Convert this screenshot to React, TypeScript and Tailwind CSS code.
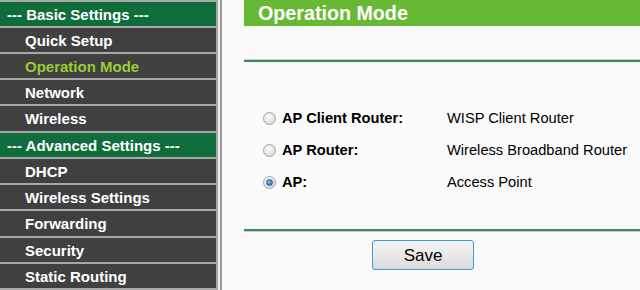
import React from 'react';

type MenuItem = { label: string; kind: 'header' | 'item'; active?: boolean; tall?: boolean };

const menu: MenuItem[] = [
  { label: '--- Basic Settings ---', kind: 'header' },
  { label: 'Quick Setup', kind: 'item' },
  { label: 'Operation Mode', kind: 'item', active: true },
  { label: 'Network', kind: 'item' },
  { label: 'Wireless', kind: 'item', tall: true },
  { label: '--- Advanced Settings ---', kind: 'header' },
  { label: 'DHCP', kind: 'item' },
  { label: 'Wireless Settings', kind: 'item' },
  { label: 'Forwarding', kind: 'item', tall: true },
  { label: 'Security', kind: 'item' },
  { label: 'Static Routing', kind: 'item' },
];

const modes = [
  { name: 'AP Client Router:', desc: 'WISP Client Router', checked: false },
  { name: 'AP Router:', desc: 'Wireless Broadband Router', checked: false },
  { name: 'AP:', desc: 'Access Point', checked: true },
];

const Radio: React.FC<{ checked: boolean }> = ({ checked }) => (
  <span className="w-[13px] h-[13px] rounded-full border border-[#a4a4a4] bg-[radial-gradient(circle_at_40%_35%,#fbfbfb,#cfcfcf)] flex items-center justify-center shrink-0">
    {checked && (
      <span className="w-[7px] h-[7px] rounded-full bg-[radial-gradient(circle_at_40%_35%,#7cc0f0,#1d63a3)] border border-[#2a5a8e]"></span>
    )}
  </span>
);

const App: React.FC = () => {
  return (
    <div className="w-[640px] h-[290px] overflow-hidden flex bg-[#fafafa] font-['Liberation_Sans',Arial,sans-serif]">
      {/* Sidebar */}
      <div className="w-[216px] h-full bg-[#a8a8a8] pt-[2px] flex flex-col gap-[2px] shrink-0">
        {menu.map((m) => (
          <div
            key={m.label}
            className={
              (m.tall ? 'h-[25px] ' : 'h-[24px] ') +
              (m.kind === 'header' ? 'bg-[#0e6d3a] pl-[7px] ' : 'bg-[#404040] pl-[25px] ') +
              'flex items-center shrink-0 text-[15px] font-bold leading-none ' +
              (m.active ? 'text-[#9acd32]' : 'text-white')
            }
          >
            {m.label}
          </div>
        ))}
      </div>
      <div className="h-full flex shrink-0">
        <div className="w-[2px] bg-[#a8a8a8]"></div>
        <div className="w-[2px] bg-[#ececec]"></div>
        <div className="w-[2px] bg-[#9c9c9c]"></div>
      </div>

      {/* Main */}
      <div className="flex-1 pl-[22px] flex flex-col">
        <div className="h-[26px] bg-[#67b934] flex items-center pl-[14px] pt-[2px]">
          <h1 className="text-white font-bold text-[19.7px] leading-none">Operation Mode</h1>
        </div>

        <div className="mt-[33px] flex flex-col">
          <div className="h-px bg-[#c4d4c9]"></div>
          <div className="h-[2px] bg-[#3b8a5c]"></div>
        </div>

        <div className="mt-[40px] flex flex-col text-[14.67px] text-black">
          {modes.map((m) => (
            <div key={m.name} className="h-[32px] flex items-center pl-[19px]">
              <Radio checked={m.checked} />
              <span className="font-bold ml-[6px] w-[165px]">{m.name}</span>
              <span>{m.desc}</span>
            </div>
          ))}
        </div>

        <div className="mt-[31px] flex flex-col">
          <div className="h-[2px] bg-[#3b8a5c]"></div>
          <div className="h-px bg-[#c4d4c9]"></div>
        </div>

        <div className="mt-[8px] pl-[128px]">
          <button className="w-[102px] h-[30px] rounded-[3px] border border-[#3c9ad6] bg-[linear-gradient(#f4f4f4,#e9e9e9_50%,#dadada)] text-[17px] text-black leading-none flex items-center justify-center">
            Save
          </button>
        </div>
      </div>
    </div>
  );
};

export default App;
